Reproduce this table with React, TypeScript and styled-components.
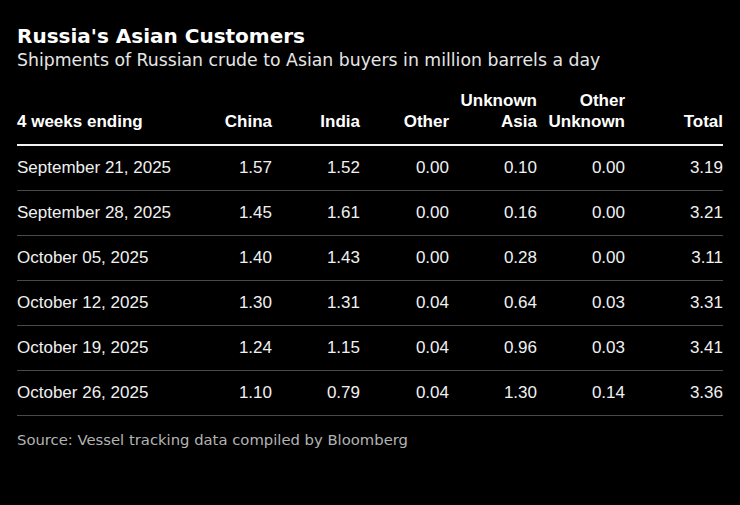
import React from 'react';
import styled, { createGlobalStyle } from 'styled-components';

const GlobalStyle = createGlobalStyle`
  html, body {
    margin: 0;
    padding: 0;
    background: #000;
  }
  * {
    box-sizing: border-box;
  }
`;

const Page = styled.div`
  width: 740px;
  height: 505px;
  background: #000;
  color: #fff;
  padding: 24px 17px 0 17px;
`;

const Title = styled.h1`
  margin: 0;
  font-family: 'DejaVu Sans', sans-serif;
  font-weight: 700;
  font-size: 20px;
  line-height: 25px;
  color: #fff;
`;

const Subtitle = styled.p`
  margin: 0;
  font-family: 'DejaVu Sans', sans-serif;
  font-size: 17.3px;
  line-height: 22px;
  color: #e6e6e6;
`;

const Table = styled.div`
  margin-top: 19px;
  font-family: 'Liberation Sans', Arial, sans-serif;
  font-size: 17px;
`;

const cols = '167px 88px 88px 89px 88px 88px 98px';

const HeadRow = styled.div`
  display: grid;
  grid-template-columns: ${cols};
  align-items: end;
  padding-bottom: 12px;
  border-bottom: 2px solid #f2f2f2;
`;

const HeadCell = styled.div<{ $left?: boolean }>`
  font-weight: 700;
  line-height: 21px;
  text-align: ${p => (p.$left ? 'left' : 'right')};
  color: #fff;
`;

const Row = styled.div`
  display: grid;
  grid-template-columns: ${cols};
  align-items: center;
  height: 45px;
  border-bottom: 1px solid #4a4a4a;
`;

const Cell = styled.div<{ $left?: boolean }>`
  line-height: 20px;
  text-align: ${p => (p.$left ? 'left' : 'right')};
  color: #f0f0f0;
`;

const Source = styled.div`
  margin-top: 14px;
  font-family: 'DejaVu Sans', sans-serif;
  font-size: 14.8px;
  line-height: 20px;
  color: #b3b3b3;
`;

const headers = ['China', 'India', 'Other', 'Unknown\nAsia', 'Other\nUnknown', 'Total'];

const rows: [string, string[]][] = [
  ['September 21, 2025', ['1.57', '1.52', '0.00', '0.10', '0.00', '3.19']],
  ['September 28, 2025', ['1.45', '1.61', '0.00', '0.16', '0.00', '3.21']],
  ['October 05, 2025', ['1.40', '1.43', '0.00', '0.28', '0.00', '3.11']],
  ['October 12, 2025', ['1.30', '1.31', '0.04', '0.64', '0.03', '3.31']],
  ['October 19, 2025', ['1.24', '1.15', '0.04', '0.96', '0.03', '3.41']],
  ['October 26, 2025', ['1.10', '0.79', '0.04', '1.30', '0.14', '3.36']],
];

const App: React.FC = () => {
  return (
    <Page>
      <GlobalStyle />
      <Title>Russia's Asian Customers</Title>
      <Subtitle>Shipments of Russian crude to Asian buyers in million barrels a day</Subtitle>

      <Table>
        <HeadRow>
          <HeadCell $left>4 weeks ending</HeadCell>
          {headers.map(h => (
            <HeadCell key={h}>
              {h.split('\n').map((line, i) => (
                <div key={i}>{line}</div>
              ))}
            </HeadCell>
          ))}
        </HeadRow>
        {rows.map(([date, values]) => (
          <Row key={date}>
            <Cell $left>{date}</Cell>
            {values.map((v, i) => (
              <Cell key={i}>{v}</Cell>
            ))}
          </Row>
        ))}
      </Table>

      <Source>Source: Vessel tracking data compiled by Bloomberg</Source>
    </Page>
  );
};

export default App;
